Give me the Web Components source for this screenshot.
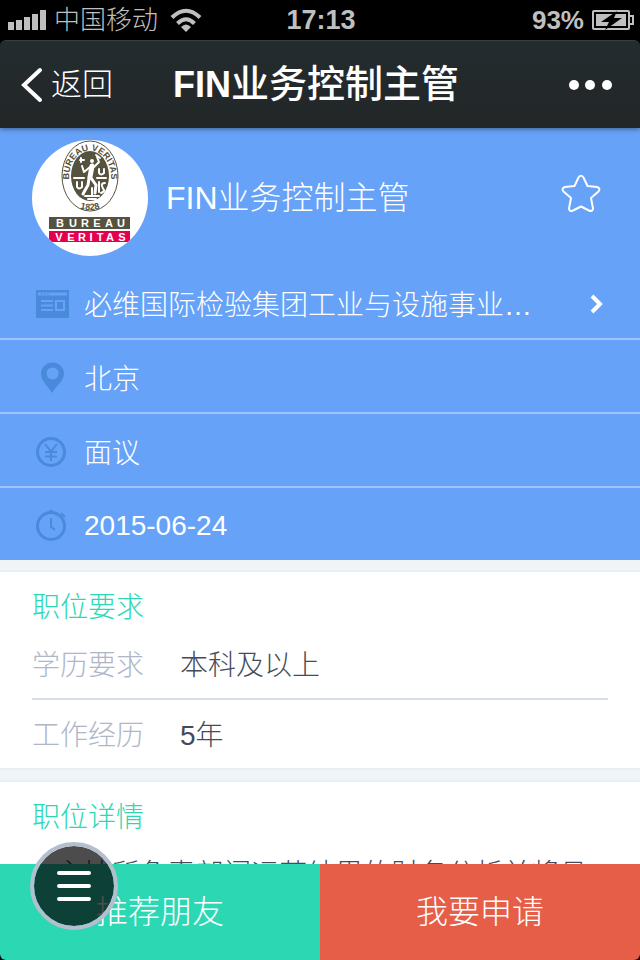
<!DOCTYPE html>
<html lang="zh-CN">
<head>
<meta charset="UTF-8">
<meta name="viewport" content="width=device-width, initial-scale=1">
<title>FIN业务控制主管</title>
<style>
    html, body{
        height:100%;
    }
    body{
        margin:0;
        background:#000;
        font-family:"Liberation Sans", "Noto Sans CJK SC", sans-serif;
        font-weight:300;
    }
</style>
</head>
<body>
<job-page></job-page>

<script>
class StatusBar extends HTMLElement {

    constructor() {
        super()
        this.attachShadow({ mode: 'open' })
    }

    connectedCallback() {
        this.shadowRoot.innerHTML =
      /*html*/`
        <style>
            :host{
                display:grid;
                grid-template-columns:1fr auto 1fr;
                align-items:center;
                height:40px;
                padding:0 6px 0 8px;
                background:#000;
                color:#bfbfbf;
                font-size:26px;
                line-height:40px;
            }
            div{
                display:flex;
                align-items:center;
                gap:8px;
            }
            .right{
                justify-content:flex-end;
            }
            .wifi{
                margin-left:4px;
            }
            b{
                font-weight:700;
            }
            .time{
                font-size:27px;
            }
        </style>
        <div>
            <svg width="38" height="20" fill="#bfbfbf"><path d="M0 12h6v8h-6zM8 10h6v10h-6zM16 7h6v13h-6zM24 4h6v16h-6zM32 0h6v20h-6z"/></svg>
            <span>中国移动</span>
            <svg class="wifi" width="32" height="24" fill="none" stroke="#bfbfbf" stroke-width="4">
                <path d="M2 9.500Q16 -4 30 9.500M7.500 15.500Q16 7 24.500 15.500"/>
                <path d="M11 19Q16 14 21 19L16 24Z" fill="#bfbfbf" stroke="none"/>
            </svg>
        </div>
        <b class="time">17:13</b>
        <div class="right">
            <b>93%</b>
            <svg width="42" height="20">
                <rect x="1" y="1" width="36" height="18" rx="1" fill="none" stroke="#bfbfbf" stroke-width="2"/>
                <path d="M4 4h30v12h-30z" fill="#bfbfbf"/>
                <path d="M38 6h3v8h-3" fill="none" stroke="#bfbfbf" stroke-width="2"/>
                <path d="M25 1L9 12h8l-4 8L30 8h-8z" fill="#000"/>
            </svg>
        </div>
      `
    }
}

class NavBar extends HTMLElement {

    constructor() {
        super()
        this.attachShadow({ mode: 'open' })
    }

    connectedCallback() {
        this.shadowRoot.innerHTML =
      /*html*/`
        <style>
            :host{
                display:grid;
                grid-template-columns:1fr auto 1fr;
                align-items:center;
                box-sizing:border-box;
                height:88px;
                padding:0 28px 0 20px;
                border-top:1px solid #38403f;
                border-radius:6px 6px 0 0;
                background:linear-gradient(#242c2f, #222627);
                box-shadow:0 1px 5px rgba(0,0,0,0.45);
                color:#fff;
                position:relative;
                z-index:1;
            }
            h1{
                margin:0;
                font-size:36px;
                font-weight:700;
                line-height:48px;
            }
            h1 ::slotted(span){
                font-size:38px;
                font-weight:500;
            }
            a{
                display:flex;
                align-items:center;
                gap:8px;
                color:#fff;
                font-size:31px;
                line-height:40px;
                text-decoration:none;
            }
            button{
                justify-self:end;
                display:flex;
                padding:0;
                border:0;
                background:none;
            }
        </style>
        <a href="#"><svg width="23" height="36" fill="none" stroke="#fff" stroke-width="4" stroke-linecap="round"><path d="M20 3L4 18L20 33"/></svg>返回</a>
        <h1><slot></slot></h1>
        <button aria-label="更多"><svg width="44" height="12" fill="#fff"><circle cx="6" cy="6" r="5"/><circle cx="22" cy="6" r="5"/><circle cx="39" cy="6" r="5"/></svg></button>
      `
    }
}

class CompanyLogo extends HTMLElement {

    constructor() {
        super()
        this.attachShadow({ mode: 'open' })
    }

    connectedCallback() {
        this.shadowRoot.innerHTML =
      /*html*/`
        <style>
            :host{
                display:block;
                width:116px;
                height:116px;
            }
            svg{
                display:block;
                font-family:"Liberation Sans", sans-serif;
                font-weight:700;
            }
        </style>
        <svg width="116" height="116" viewBox="0 0 116 116" role="img" aria-label="Bureau Veritas">
            <defs>
                <clipPath id="disc"><circle cx="58" cy="58" r="58"/></clipPath>
                <path id="arc" d="M39 49A21 27 0 1 1 77 49"/>
                <path id="foot" d="M44 67Q58 73 72 67"/>
            </defs>
            <g clip-path="url(#disc)">
                <rect width="116" height="116" fill="#fff"/>
                <ellipse cx="58" cy="36" rx="28" ry="35" fill="#fff" stroke="#55523f" stroke-width="1"/>
                <ellipse cx="58" cy="36" rx="19" ry="25" fill="#55523f"/>
                <g fill="none" stroke="#fff" stroke-linecap="round" stroke-linejoin="round">
                    <path d="M60 26L58 37" stroke-width="5"/>
                    <path d="M57 38L56 45L51 54M59 38L64 45L63 53" stroke-width="3"/>
                    <path d="M58 27L52 32L50 26M62 27L67 22L65 17" stroke-width="2"/>
                    <path d="M49 18v4M48 20h4M64 15l4 3M60 48v8M53 56h14M56 59h8M42 38h10M65 38h9" stroke-width="2"/>
                    <path d="M45 42v5q2 3 5 0v-5M67 29v4q2 3 5 0v-4M67 42v10M73 43q-4 0-3 3t2 4t-3 3" stroke-width="2"/>
                    <circle cx="60" cy="21" r="2" fill="#fff" stroke="none"/>
                </g>
                <g fill="#55523f" font-size="9" text-anchor="middle">
                    <text><textPath href="#arc" startOffset="50%">BUREAU VERITAS</textPath></text>
                    <text><textPath href="#foot" startOffset="50%">1828</textPath></text>
                </g>
                <rect x="17" y="77" width="81" height="12" fill="#55523f"/>
                <rect x="17" y="91" width="81" height="11" fill="#e4004f"/>
                <g fill="#fff" font-size="11" text-anchor="middle">
                    <text y="87" x="28 41 53 65 77 89">BUREAU</text>
                    <text y="101" x="27 39 50 59 68 78 90">VERITAS</text>
                </g>
            </g>
        </svg>
      `
    }
}

class InfoRow extends HTMLElement {

    constructor() {
        super()
        this.attachShadow({ mode: 'open' })
    }

    connectedCallback() {
        this.shadowRoot.innerHTML =
      /*html*/`
        <style>
            :host{
                display:flex;
                align-items:center;
                gap:14px;
                box-sizing:border-box;
                height:74px;
                padding:4px 34px 0 34px;
                border-bottom:2px solid #a0c4fa;
                color:#fff;
                font-size:28px;
                line-height:40px;
            }
            :host(:last-of-type){
                height:72px;
                border-bottom:0;
            }
            .icon{
                display:flex;
                width:36px;
            }
            .text{
                flex:1;
                min-width:0;
                padding-top:4px;
            }
            :host(:last-of-type) .text{
                padding-top:0;
            }
        </style>
        <span class="icon"><slot name="icon"></slot></span>
        <span class="text"><slot></slot></span>
        <slot name="arrow"></slot>
      `
    }
}

class InfoCard extends HTMLElement {

    constructor() {
        super()
        this.attachShadow({ mode: 'open' })
    }

    connectedCallback() {
        this.shadowRoot.innerHTML =
      /*html*/`
        <style>
            :host{
                display:block;
                padding:14px 32px 0;
                border-top:2px solid #e6eff7;
                border-bottom:2px solid #e6eff7;
                background:#fff;
            }
            h2{
                margin:0;
                color:#2cd8b4;
                font-size:28px;
                font-weight:300;
                line-height:44px;
            }
        </style>
        <h2>${this.getAttribute('heading')}</h2>
        <slot></slot>
      `
    }
}

class FieldRow extends HTMLElement {

    constructor() {
        super()
        this.attachShadow({ mode: 'open' })
    }

    connectedCallback() {
        this.shadowRoot.innerHTML =
      /*html*/`
        <style>
            :host{
                display:flex;
                gap:36px;
                padding-top:4px;
                border-bottom:2px solid #d8dee8;
                color:#454b59;
                font-size:28px;
                line-height:64px;
            }
            :host(:last-of-type){
                border-bottom:0;
            }
            .label{
                color:#aeb6c8;
            }
        </style>
        <span class="label">${this.getAttribute('label')}</span>
        <span><slot></slot></span>
      `
    }
}

class ActionBar extends HTMLElement {

    constructor() {
        super()
        this.attachShadow({ mode: 'open' })
    }

    connectedCallback() {
        this.shadowRoot.innerHTML =
      /*html*/`
        <style>
            :host{
                display:grid;
                grid-template-columns:1fr 1fr;
                position:relative;
                height:96px;
            }
            .action{
                padding:0;
                border:0;
                background:#2cd8b4;
                color:#fff;
                font:inherit;
                font-size:32px;
                line-height:48px;
            }
            .recommend{
                border-bottom-left-radius:6px;
            }
            .apply{
                background:#e65e48;
                border-bottom-right-radius:6px;
            }
            .menu{
                position:absolute;
                left:30px;
                bottom:30px;
                display:flex;
                align-items:center;
                justify-content:center;
                width:88px;
                height:88px;
                padding:0;
                border:4px solid #b4bfce;
                border-radius:50%;
                background:rgba(0,0,0,0.7);
                background-clip:padding-box;
            }
        </style>
        <button class="action recommend">推荐朋友</button>
        <button class="action apply">我要申请</button>
        <button class="menu" aria-label="菜单"><svg width="34" height="32" fill="none" stroke="#fff" stroke-width="4" stroke-linecap="round"><path d="M2 3h30M2 16h30M2 29h30"/></svg></button>
      `
    }
}

class JobPage extends HTMLElement {

    constructor() {
        super()
        this.attachShadow({ mode: 'open' })
    }

    connectedCallback() {
        this.shadowRoot.innerHTML =
      /*html*/`
        <style>
            :host{
                display:flex;
                flex-direction:column;
                height:100vh;
            }
            main{
                flex:1;
                min-height:0;
                overflow:hidden;
                background:#f0f4f7;
            }
            .summary{
                background:#65a2f8;
            }
            .head{
                display:flex;
                align-items:center;
                gap:18px;
                padding:12px 39px 10px 32px;
                color:#fff;
            }
            .head h2{
                flex:1;
                margin:0;
                font-size:32px;
                font-weight:300;
                line-height:48px;
            }
            .head button{
                display:flex;
                padding:0 0 8px;
                border:0;
                background:none;
            }
            .company{
                display:block;
                overflow:hidden;
                color:#fff;
                text-decoration:none;
                text-overflow:ellipsis;
                white-space:nowrap;
            }
            info-card{
                margin-top:10px;
            }
            p{
                margin:14px 0 0;
                color:#454b59;
                font-size:28px;
                line-height:42px;
            }
        </style>
        <status-bar></status-bar>
        <nav-bar>FIN<span>业务控制主管</span></nav-bar>
        <main>
            <section class="summary">
                <div class="head">
                    <company-logo></company-logo>
                    <h2>FIN业务控制主管</h2>
                    <button aria-label="收藏"><svg width="40" height="40" fill="none" stroke="#fff" stroke-width="2" stroke-linejoin="round"><path d="M17.500 3.500Q20 0 22.500 3.500L26.500 12L36 13Q40 14.500 37.500 17.500L30 24L32 34.500Q31.500 38 28 36.500L20 32.500L12 36.500Q8.500 38 8 34.500L10 24L2.500 17.500Q0 14.500 4 13L13.500 12Z"/></svg></button>
                </div>
                <info-row>
                    <svg slot="icon" width="36" height="28" fill="none" stroke="#65a2f8"><path d="M2 0h33v28h-33z" fill="#4a8ada" stroke="none"/><path d="M4 2.500h29v3h-29z" fill="#65a2f8" stroke="none"/><path d="M7 4h8" stroke="#4a8ada" stroke-dasharray="2 1"/><path d="M7 11h12M7 15.500h12M7 20h12" stroke-width="2"/><path d="M22 11h8v9h-8z" stroke-width="2"/></svg>
                    <a class="company" href="#">必维国际检验集团工业与设施事业…</a>
                    <svg slot="arrow" width="16" height="20" fill="none" stroke="#fff" stroke-width="4"><path d="M2 2L10 10L2 18"/></svg>
                </info-row>
                <info-row>
                    <svg slot="icon" width="36" height="32"><path d="M18 31C14 24 7 19 7 12a11.500 11.500 0 0 1 23 0C30 19 22 24 18 31zM18.500 5.500a6 6 0 1 0 .1 0z" fill="#4a8ada" fill-rule="evenodd"/></svg>
                    北京
                </info-row>
                <info-row>
                    <svg slot="icon" width="36" height="32" fill="none" stroke="#4a8ada" stroke-width="2"><circle cx="17" cy="16" r="13.500" stroke-width="3"/><path d="M11 8L17 15.500L23 8M17 15v10M11 16h12M11 20.500h12"/></svg>
                    面议
                </info-row>
                <info-row>
                    <svg slot="icon" width="36" height="32" fill="none" stroke="#4a8ada" stroke-width="2"><circle cx="17" cy="16" r="13.500" stroke-width="3"/><path d="M17 8v9l4 3M15 1h4M27 3l4 4"/></svg>
                    2015-06-24
                </info-row>
            </section>
            <info-card heading="职位要求">
                <field-row label="学历要求">本科及以上</field-row>
                <field-row label="工作经历">5年</field-row>
            </info-card>
            <info-card heading="职位详情">
                <p>1.主持所负责部门运营结果的财务分析并将月度结果向管理层汇报</p>
            </info-card>
        </main>
        <action-bar></action-bar>
      `
    }
}

customElements.define('status-bar', StatusBar);
customElements.define('nav-bar', NavBar);
customElements.define('company-logo', CompanyLogo);
customElements.define('info-row', InfoRow);
customElements.define('info-card', InfoCard);
customElements.define('field-row', FieldRow);
customElements.define('action-bar', ActionBar);
customElements.define('job-page', JobPage);
</script>
</body>
</html>
